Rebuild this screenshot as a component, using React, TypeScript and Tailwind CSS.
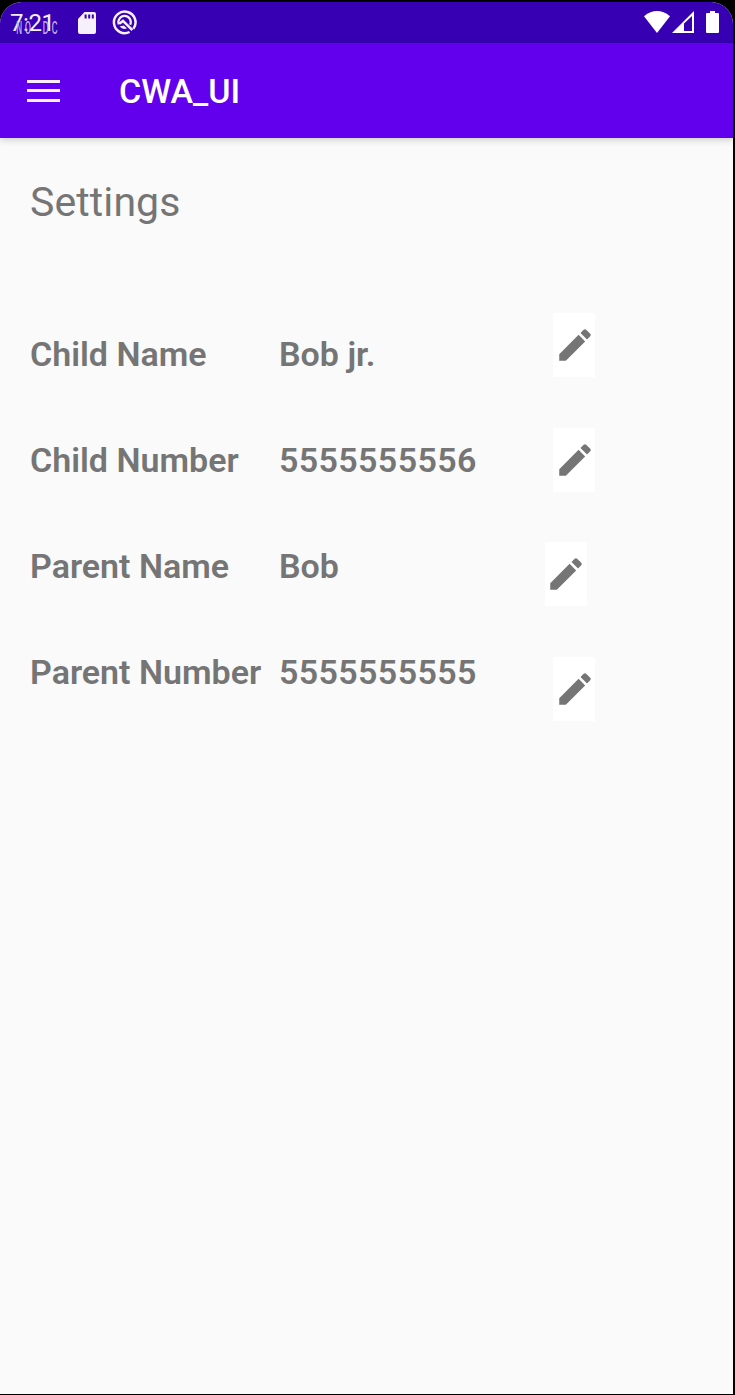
const fields = [
  { label: "Child Name", value: "Bob jr.", valueClass: "" },
  { label: "Child Number", value: "5555555556", valueClass: "tracking-[0.35px]" },
  { label: "Parent Name", value: "Bob", valueClass: "" },
  { label: "Parent Number", value: "5555555555", valueClass: "tracking-[0.35px]" },
];

function StatusBar() {
  return (
    <div className="flex h-[41px] shrink-0 items-start bg-[#3700b3] text-[#f6effc]">
      <div className="relative w-[76px] shrink-0 pl-[10px] pt-[7px] text-[24px] leading-7 tracking-[-0.4px]">
        7:21
        <span className="absolute left-[16px] top-[17px] flex origin-left scale-x-[0.5] gap-[18px] font-['Liberation_Mono'] text-[21px] leading-[20px] tracking-[5px] text-[#c9b4ee]">
          <span>NO</span>
          <span>DC</span>
        </span>
      </div>
      <svg className="ml-[2px] mt-[10px] h-[22px] w-[18px]" viewBox="0 0 18 22" fill="currentColor">
        <path fillRule="evenodd" d="M6.5 0H16Q18 0 18 2V20Q18 22 16 22H2Q0 22 0 20V7ZM6.6 2.5V6.5H8.6V2.5ZM10.2 2.5V6.5H12.2V2.5ZM13.8 2.5V6.5H15.8V2.5Z" />
      </svg>
      <svg className="ml-[16px] mt-[8px] h-[25px] w-[25px]" viewBox="0 0 25 25" fill="none" stroke="currentColor">
        <path d="M21.4 18.8A10.8 10.8 0 1 0 17.6 22" strokeWidth="2.5" />
        <path d="M6.8 14.4A6.2 6.2 0 1 1 18.2 14.8" strokeWidth="2.2" />
        <path d="M7.2 13.8L11 10.9L20.4 20.2" strokeWidth="2.6" />
        <path d="M7.6 16.4Q10.8 20.2 15 18.2L11.6 15.6Z" fill="currentColor" stroke="none" />
      </svg>
      <svg className="ml-auto mt-[9px] h-[22px] w-[26px]" viewBox="0 0 26 22" fill="#fff">
        <path d="M0 5.2Q13 -5 26 5.2L13 22Z" />
      </svg>
      <svg className="ml-[2px] mt-[9px] h-[22px] w-[22px]" viewBox="0 0 22 22" fill="#fff">
        <path fillRule="evenodd" d="M22 0V22H0ZM20 5L12 12.5V20H20Z" />
      </svg>
      <svg className="ml-[12px] mr-[14px] mt-[9px] h-[22px] w-[13px]" viewBox="0 0 13 22" fill="#fff">
        <path d="M4 0H9V2H12Q13 2 13 3V21Q13 22 12 22H1Q0 22 0 21V3Q0 2 1 2H4Z" />
      </svg>
    </div>
  );
}

function AppBar() {
  return (
    <header className="flex h-[95px] shrink-0 items-center bg-[#6200ee] pl-[27px] text-white shadow-[0_2px_7px_rgba(0,0,0,0.18)]">
      <button aria-label="Open navigation" className="flex h-[22px] w-[33px] flex-col justify-between">
        <span className="h-[3px] w-full bg-[#f8f0ff]" />
        <span className="h-[3px] w-full bg-[#f8f0ff]" />
        <span className="h-[3px] w-full bg-[#f8f0ff]" />
      </button>
      <h1 className="ml-[59px] pt-px text-[34px] font-medium leading-10">CWA_UI</h1>
    </header>
  );
}

function EditButton({ className = "pl-px" }: { className?: string }) {
  return (
    <button aria-label="Edit" className={`flex h-[64px] w-[42px] items-center justify-center bg-white ${className}`}>
      <svg className="h-[42px] w-[42px] shrink-0" viewBox="0 0 24 24" fill="#757575">
        <path d="M3 17.25V21h3.75L17.81 9.94l-3.75-3.75L3 17.25zM20.71 7.04a1 1 0 0 0 0-1.41l-2.34-2.34a1 1 0 0 0-1.41 0l-1.83 1.83 3.75 3.75 1.83-1.83z" />
      </svg>
    </button>
  );
}

export default function App() {
  return (
    <div className="h-[1395px] w-[735px] bg-black pb-px pr-[2px] pt-[2px] font-['Roboto',sans-serif]">
      <div className="flex h-full flex-col overflow-hidden rounded-t-[22px] bg-[#fafafa]">
        <StatusBar />
        <AppBar />
        <main className="text-[#757575]">
          <h2 className="pl-[30px] pt-[40px] text-[41px] leading-[48px] tracking-[0.1px]">Settings</h2>
          <div className="mt-[87px] flex pl-[30px]">
            <dl className="w-[515px] pt-[20px] text-[34px] font-semibold leading-[42px]">
              {fields.map((field) => (
                <div key={field.label} className="flex h-[106px] whitespace-nowrap">
                  <dt className="w-[249px] shrink-0">{field.label}</dt>
                  <dd className={field.valueClass}>{field.value}</dd>
                </div>
              ))}
            </dl>
            <div className="flex w-[50px] flex-col items-end gap-[50.6px]">
              <EditButton />
              <EditButton />
              <EditButton className="mr-[8px]" />
              <EditButton />
            </div>
          </div>
        </main>
      </div>
    </div>
  );
}
